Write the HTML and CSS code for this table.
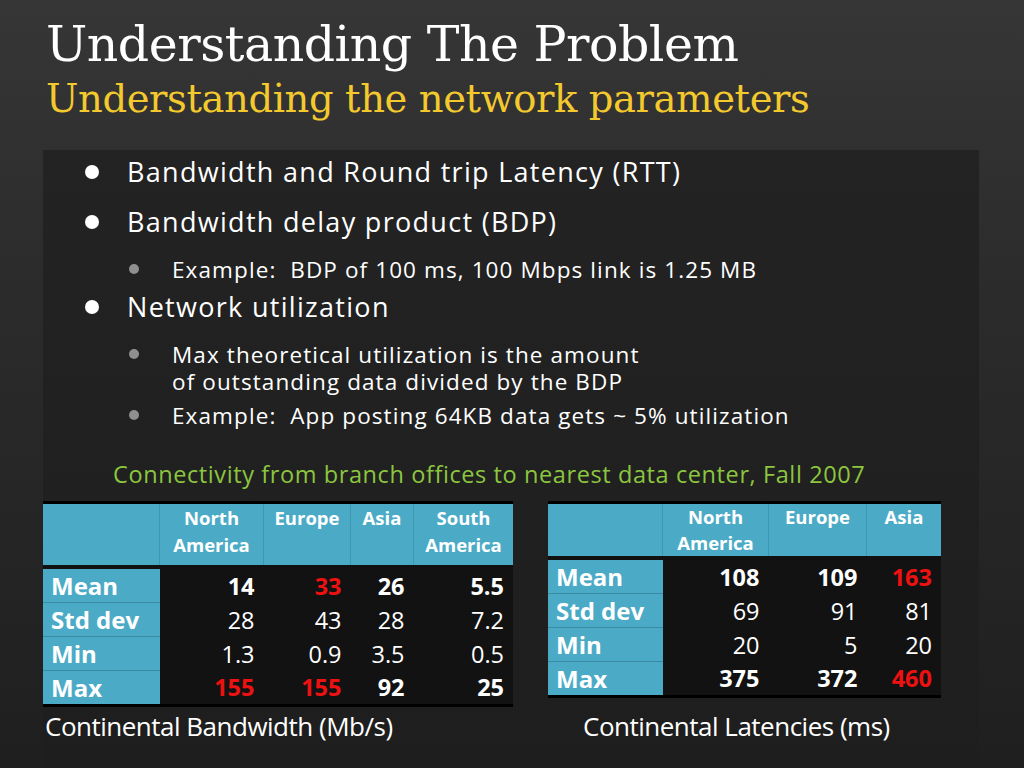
FILE: index.html
```html
<!DOCTYPE html>
<html>
<head>
<meta charset="utf-8">
<link rel="stylesheet" href="styles.css">
</head>
<body>
<div class="slide">
  <header class="head">
    <h1 class="title">Understanding The Problem</h1>
    <h2 class="subtitle">Understanding the network parameters</h2>
  </header>
  <main class="content">
    <ul class="bullets">
      <li class="l1 first">Bandwidth and Round trip Latency (RTT)</li>
      <li class="l1">Bandwidth delay product (BDP)</li>
      <li class="l2">Example:&nbsp; BDP of 100 ms, 100 Mbps link is 1.25 MB</li>
      <li class="l1">Network utilization</li>
      <li class="l2">Max theoretical utilization is the amount<br>of outstanding data divided by the BDP</li>
      <li class="l2">Example:&nbsp; App posting 64KB data gets ~ 5% utilization</li>
    </ul>
    <p class="note">Connectivity from branch offices to nearest data center, Fall 2007</p>
    <div class="tables">
      <table class="data t1">
        <thead>
          <tr><th class="corner"></th><th>North<br>America</th><th>Europe</th><th>Asia</th><th>South<br>America</th></tr>
        </thead>
        <tbody>
          <tr class="b"><td class="lab">Mean</td><td>14</td><td class="red">33</td><td>26</td><td>5.5</td></tr>
          <tr><td class="lab">Std dev</td><td>28</td><td>43</td><td>28</td><td>7.2</td></tr>
          <tr><td class="lab">Min</td><td>1.3</td><td>0.9</td><td>3.5</td><td>0.5</td></tr>
          <tr class="b"><td class="lab">Max</td><td class="red">155</td><td class="red">155</td><td>92</td><td>25</td></tr>
        </tbody>
      </table>
      <table class="data t2">
        <thead>
          <tr><th class="corner"></th><th>North<br>America</th><th>Europe</th><th>Asia</th></tr>
        </thead>
        <tbody>
          <tr class="b"><td class="lab">Mean</td><td>108</td><td>109</td><td class="red">163</td></tr>
          <tr><td class="lab">Std dev</td><td>69</td><td>91</td><td>81</td></tr>
          <tr><td class="lab">Min</td><td>20</td><td>5</td><td>20</td></tr>
          <tr class="b"><td class="lab">Max</td><td>375</td><td>372</td><td class="red">460</td></tr>
        </tbody>
      </table>
      <p class="cap cap1">Continental Bandwidth (Mb/s)</p>
      <p class="cap cap2">Continental Latencies (ms)</p>
    </div>
  </main>
</div>
</body>
</html>
```

FILE: styles.css
```css
html, body {
  margin: 0;
  padding: 0;
}
body {
  width: 1024px;
  height: 768px;
  overflow: hidden;
  background: linear-gradient(180deg, #363636 0%, #2c2c2c 35%, #1f1f1f 100%);
  font-family: "Open Sans", "Noto Sans", sans-serif;
  color: #fff;
}
.slide {
  display: flex;
  flex-direction: column;
  height: 768px;
}
.head {
  padding: 14px 0 0 46px;
  height: 132px;
  box-sizing: border-box;
}
.title {
  margin: 0;
  font-family: "DejaVu Serif", serif;
  font-weight: normal;
  font-size: 49px;
  line-height: 62px;
  color: #ffffff;
  letter-spacing: -0.5px;
}
.subtitle {
  margin: 0;
  font-family: "DejaVu Serif", serif;
  font-weight: normal;
  font-size: 38.5px;
  line-height: 46px;
  color: #f3c92e;
  letter-spacing: -0.4px;
}
.content {
  margin: 18px 0 0 43px;
  width: 936px;
  flex: 1;
  background: linear-gradient(180deg, #232323 0%, #1e1e1e 100%);
  padding-top: 5px;
  box-sizing: border-box;
}
.bullets {
  list-style: none;
  margin: 0;
  padding: 0;
}
.bullets li {
  position: relative;
  margin-top: 7px;
}
.l1 {
  font-size: 27px;
  line-height: 34px;
  letter-spacing: 1.3px;
  padding-left: 84px;
  margin-top: 16px !important;
}
.l1.first {
  margin-top: 0 !important;
}
.l1::before {
  content: "";
  position: absolute;
  left: 42px;
  top: 10px;
  width: 14px;
  height: 14px;
  border-radius: 50%;
  background: #fff;
}
.l1 + .l2 {
  margin-top: 17px;
}
.l2 + .l1 {
  margin-top: 7px !important;
}
.l2 {
  font-size: 22.5px;
  line-height: 27px;
  letter-spacing: 1.1px;
  padding-left: 129px;
}
.l2::before {
  content: "";
  position: absolute;
  left: 86px;
  top: 8px;
  width: 10px;
  height: 10px;
  border-radius: 50%;
  background: #8f8f8f;
}
.note {
  margin: 30px 0 0 70px;
  font-size: 23.5px;
  line-height: 30px;
  letter-spacing: 0.6px;
  color: #8cc63f;
}
.tables {
  display: grid;
  grid-template-columns: 470px 393px;
  column-gap: 35px;
  align-items: start;
  margin-top: 12px;
}
.data {
  border-collapse: collapse;
  border-top: 3px solid #000;
  border-bottom: 3px solid #000;
  background: #121212;
  table-layout: fixed;
}
.data th {
  background: #4babc6;
  color: #fff;
  font-weight: bold;
  font-size: 18.5px;
  line-height: 27px;
  text-align: center;
  vertical-align: top;
  padding: 0;
  border-left: 1px solid #3f97b0;
  border-bottom: 4px solid #111;
}
.data th.corner {
  border-left: none;
}
.t1 th {
  height: 61px;
}
.t2 th {
  height: 50px;
}
.t2 th {
  line-height: 26px;
}
.data td {
  font-size: 23.5px;
  height: 33px;
  line-height: 30px;
  padding: 0 9px 0 0;
  text-align: right;
  vertical-align: middle;
  color: #fff;
}
.data tr.b td {
  font-weight: bold;
}
.data td.red {
  color: #ee1111;
}
.data td.lab {
  background: #4babc6;
  text-align: left;
  font-weight: bold;
  font-size: 24px;
  padding-left: 8px;
  border-top: 1px solid #3a8aa2;
}
.data tbody tr:first-child td.lab {
  border-top: none;
}
.t1 { width: 470px; }
.t1 th:nth-child(1) { width: 116px; }
.t1 th:nth-child(2) { width: 103px; }
.t1 th:nth-child(3) { width: 86px; }
.t1 th:nth-child(4) { width: 62px; }
.t1 th:nth-child(5) { width: 99px; }
.t2 { width: 393px; }
.t2 th:nth-child(1) { width: 114px; }
.t2 th:nth-child(2) { width: 105px; }
.t2 th:nth-child(3) { width: 97px; }
.t2 th:nth-child(4) { width: 74px; }
.cap {
  margin: 0;
  font-size: 26px;
  line-height: 30px;
  letter-spacing: -0.5px;
  align-self: start;
}
.cap1 {
  margin-top: 4px;
  padding-left: 2px;
}
.cap2 {
  margin-top: 4px;
  padding-left: 35px;
}
```
